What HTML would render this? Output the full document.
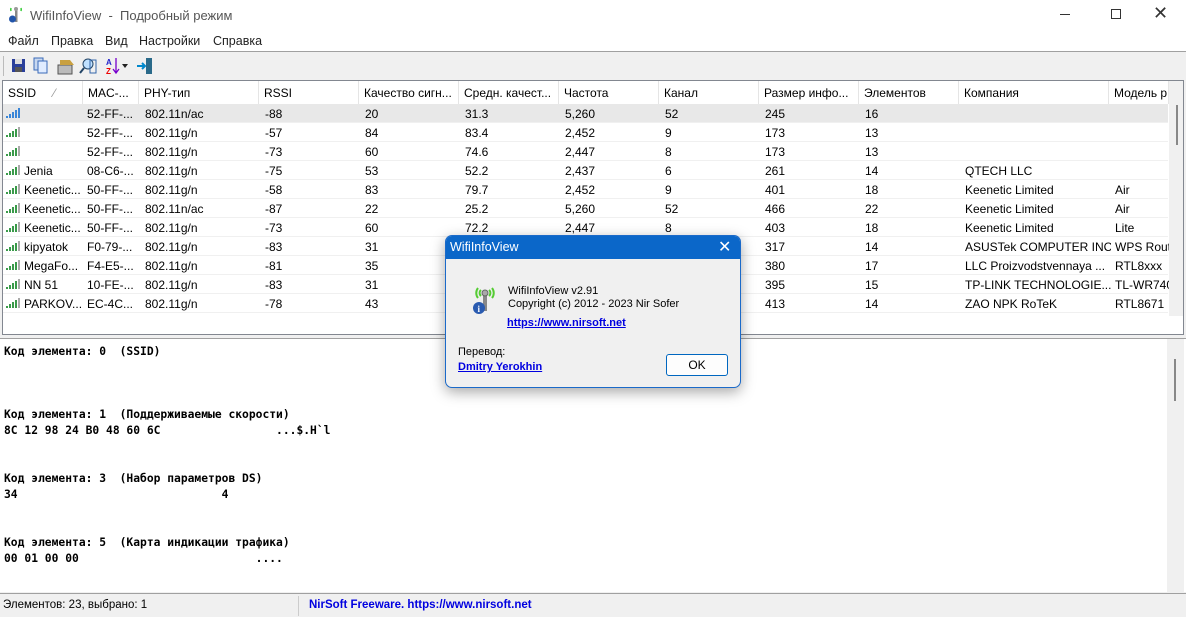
<!DOCTYPE html>
<html><head><meta charset="utf-8"><style>
*{box-sizing:border-box;margin:0;padding:0}
body{width:1186px;height:617px;overflow:hidden;background:#f0f0f0;font-family:"Liberation Sans",sans-serif;font-size:12px;color:#000;position:relative}
.abs{position:absolute}
#title{left:0;top:0;width:1186px;height:32px;background:#fff}
#title .t{left:30px;top:8px;font-size:13px;color:#555}
#menu{left:0;top:32px;width:1186px;height:19px;background:#fff}
#menu span{position:absolute;top:2px;font-size:12.5px;color:#222}
#tb{left:0;top:51px;width:1186px;height:28px;background:#f0f0f0;border-top:1px solid #a0a0a0}
#list{left:2px;top:80px;width:1182px;height:255px;background:#fff;border:1px solid #828790;overflow:hidden}
.hdr{position:absolute;top:0;height:23px;border-right:1px solid #e5e5e5;padding:5px 0 0 5px;font-size:12px;white-space:nowrap;overflow:hidden;background:#fff}
.row{position:absolute;left:0;width:1165px;height:19px;border-bottom:1px solid #f0f0f0}
.row span{position:absolute;top:3px;white-space:nowrap;overflow:hidden;font-size:12px}
.sel{background:#e8e8e8}
#hsb{left:1px;top:315px;width:1165px;height:17px;background:#f0f0f0}
#lower{left:0;top:338px;width:1186px;height:254px;background:#fff;border-top:1px solid #a0a0a0}
#lower pre{position:absolute;left:4px;font-family:"DejaVu Sans Mono",monospace;font-weight:bold;font-size:11.3px;line-height:16px}
#status{left:0;top:593px;width:1186px;height:24px;background:#f0f0f0;border-top:1px solid #a0a0a0}
#dlg{left:445px;top:235px;width:296px;height:153px;background:#f0f0f0;border:1px solid #1b6ac9;border-radius:7px;box-shadow:0 4px 14px rgba(0,0,0,.35);overflow:hidden}
#dlg .tt{left:0;top:0;width:296px;height:23px;background:#0b67c9;color:#fff;font-size:12.5px;padding:4px 0 0 4px}
.lnk{color:#0000e0;font-weight:bold;text-decoration:underline;font-size:11px}
</style></head><body>
<div id="title" class="abs">
<svg class="abs" style="left:8px;top:6px" width="16" height="18" viewBox="0 0 16 18"><path d="M3 5a5 5 0 0 1 0-3M13 5a5 5 0 0 0 0-3" stroke="#3c3" fill="none" stroke-width="1.5"/><rect x="7" y="4" width="2.5" height="12" fill="#888"/><circle cx="8" cy="3" r="2" fill="#999"/><circle cx="4.5" cy="13" r="3.5" fill="#2255aa"/></svg>
<span class="abs t">WifiInfoView &nbsp;- &nbsp;Подробный режим</span>
<span class="abs" style="left:1060px;top:14px;width:10px;height:1px;background:#333"></span>
<span class="abs" style="left:1111px;top:9px;width:10px;height:10px;border:1px solid #333"></span>
<span class="abs" style="left:1153px;top:3px;font-size:18px;color:#333">✕</span>
</div>
<div id="menu" class="abs">
<span style="left:8px">Файл</span><span style="left:51px">Правка</span><span style="left:105px">Вид</span><span style="left:139px">Настройки</span><span style="left:213px">Справка</span>
</div>
<div id="tb" class="abs">
<span class="abs" style="left:3px;top:4px;width:1px;height:20px;background:#bbb"></span>
<svg class="abs" style="left:10px;top:5px" width="150" height="18">
<rect x="2" y="2" width="13" height="13" fill="#2a3f9a"/><rect x="5" y="2" width="7" height="5" fill="#ddd"/><rect x="5" y="10" width="7" height="5" fill="#555"/>
<rect x="24" y="1" width="9" height="12" fill="#c8d8f0" stroke="#3a6ab8"/><rect x="28" y="4" width="9" height="12" fill="#e0ecff" stroke="#3a6ab8"/>
<path d="M48 8h14v9h-14z" fill="#bbb" stroke="#555"/><path d="M50 3h10l4 5h-14z" fill="#c9a040"/>
<circle cx="78" cy="7" r="5" fill="#bfe0ff" stroke="#246"/><path d="M74 11l-4 5" stroke="#246" stroke-width="2"/><rect x="80" y="3" width="6" height="13" fill="none" stroke="#36a"/>
<text x="96" y="8" font-size="8" fill="#22c" font-weight="bold" font-family="Liberation Sans">A</text><text x="96" y="17" font-size="8" fill="#e00" font-weight="bold" font-family="Liberation Sans">Z</text><path d="M106 1v14M103 12l3 4 3-4" stroke="#70c" fill="none" stroke-width="1.3"/><path d="M112 7h6l-3 4z" fill="#222"/>
<path d="M136 1h6v16h-6z" fill="#2a6a8a"/><path d="M127 9h8M132 6l3 3-3 3" stroke="#08c" stroke-width="2" fill="none"/>
</svg>
</div>
<div id="list" class="abs">
<div class="hdr" style="left:0;width:80px">SSID <span style="color:#999;margin-left:14px">⁄</span></div>
<div class="hdr" style="left:80px;width:56px">MAC-...</div>
<div class="hdr" style="left:136px;width:120px">PHY-тип</div>
<div class="hdr" style="left:256px;width:100px">RSSI</div>
<div class="hdr" style="left:356px;width:100px">Качество сигн...</div>
<div class="hdr" style="left:456px;width:100px">Средн. качест...</div>
<div class="hdr" style="left:556px;width:100px">Частота</div>
<div class="hdr" style="left:656px;width:100px">Канал</div>
<div class="hdr" style="left:756px;width:100px">Размер инфо...</div>
<div class="hdr" style="left:856px;width:100px">Элементов</div>
<div class="hdr" style="left:956px;width:150px">Компания</div>
<div class="hdr" style="left:1106px;width:60px">Модель р</div>
<div id="rows"></div>
<div class="abs" style="left:1166px;top:0;width:15px;height:235px;background:#f0f0f0"></div>
<div class="abs" style="left:1173px;top:24px;width:2px;height:40px;background:#888"></div>
<div id="hsb" class="abs"><div class="abs" style="left:18px;top:8px;width:372px;height:2px;background:#888"></div></div>
</div>
<div id="lower" class="abs">
<pre style="top:5px">Код элемента: 0  (SSID)</pre>
<pre style="top:68px">Код элемента: 1  (Поддерживаемые скорости)
8C 12 98 24 B0 48 60 6C                 ...$.H`l</pre>
<pre style="top:132px">Код элемента: 3  (Набор параметров DS)
34                              4</pre>
<pre style="top:196px">Код элемента: 5  (Карта индикации трафика)
00 01 00 00                          ....</pre>
<div class="abs" style="left:1167px;top:0;width:17px;height:253px;background:#f0f0f0"></div>
<div class="abs" style="left:1174px;top:20px;width:2px;height:42px;background:#888"></div>
</div>
<div id="status" class="abs">
<span class="abs" style="left:3px;top:5px;font-size:11.5px">Элементов: 23, выбрано: 1</span>
<span class="abs" style="left:298px;top:2px;width:1px;height:20px;background:#ccc"></span>
<span class="abs" style="left:309px;top:5px;font-size:11.5px;color:#0000e0;font-weight:bold">NirSoft Freeware. https://www.nirsoft.net</span>
</div>
<div id="dlg" class="abs">
<div class="abs tt">WifiInfoView<span style="position:absolute;left:272px;top:1px;font-size:16px">✕</span></div>
<svg class="abs" style="left:24px;top:48px" width="30" height="32" viewBox="0 0 30 32"><path d="M8 14a8 8 0 0 1 0-10M22 14a8 8 0 0 0 0-10M11 12a4 4 0 0 1 0-6M19 12a4 4 0 0 0 0-6" stroke="#5c3" stroke-width="2" fill="none"/><rect x="13" y="9" width="4" height="18" fill="#888"/><circle cx="15" cy="9" r="3" fill="#aaa" stroke="#666"/><circle cx="9" cy="24" r="6" fill="#2a5bb0"/><text x="7.5" y="28" fill="#fff" font-size="9" font-weight="bold" font-family="Liberation Serif">i</text></svg>
<div class="abs" style="left:62px;top:49px;font-size:11px;line-height:13px">WifiInfoView v2.91<br>Copyright (c) 2012 - 2023 Nir Sofer</div>
<div class="abs lnk" style="left:61px;top:81px">https://www.nirsoft.net</div>
<div class="abs" style="left:12px;top:110px;font-size:11px">Перевод:</div>
<div class="abs lnk" style="left:12px;top:125px">Dmitry Yerokhin</div>
<div class="abs" style="left:220px;top:118px;width:62px;height:22px;background:#fdfdfd;border:1px solid #0067c0;border-radius:3px;font-size:12px;text-align:center;padding-top:3px">OK</div>
</div>
<script>
var d=[["","52-FF-...","802.11n/ac","-88","20","31.3","5,260","52","245","16","",""],
["","52-FF-...","802.11g/n","-57","84","83.4","2,452","9","173","13","",""],
["","52-FF-...","802.11g/n","-73","60","74.6","2,447","8","173","13","",""],
["Jenia","08-C6-...","802.11g/n","-75","53","52.2","2,437","6","261","14","QTECH LLC",""],
["Keenetic...","50-FF-...","802.11g/n","-58","83","79.7","2,452","9","401","18","Keenetic Limited","Air"],
["Keenetic...","50-FF-...","802.11n/ac","-87","22","25.2","5,260","52","466","22","Keenetic Limited","Air"],
["Keenetic...","50-FF-...","802.11g/n","-73","60","72.2","2,447","8","403","18","Keenetic Limited","Lite"],
["kipyatok","F0-79-...","802.11g/n","-83","31","","","","317","14","ASUSTek COMPUTER INC.","WPS Rout"],
["MegaFo...","F4-E5-...","802.11g/n","-81","35","","","","380","17","LLC Proizvodstvennaya ...","RTL8xxx"],
["NN 51","10-FE-...","802.11g/n","-83","31","","","","395","15","TP-LINK TECHNOLOGIE...","TL-WR740"],
["PARKOV...","EC-4C...","802.11g/n","-78","43","","","","413","14","ZAO NPK RoTeK","RTL8671"]];
var x=[21,84,142,262,362,462,562,662,762,862,962,1112],w=[60,54,112,94,94,94,94,94,94,94,146,54],h="";
d.forEach(function(r,i){var y=23+i*19;h+='<div class="row'+(i==0?' sel':'')+'" style="top:'+y+'px">';
h+='<svg style="position:absolute;left:3px;top:4px" width="16" height="11">';
for(var k=0;k<5;k++){var hh=2+k*2;h+='<rect x="'+(k*3)+'" y="'+(10-hh)+'" width="2" height="'+hh+'" fill="'+(i==0?'#3a86d8':(k<4?'#3a9a4a':'#aaa'))+'"/>';}
h+='</svg>';
r.forEach(function(c,j){h+='<span style="left:'+x[j]+'px;width:'+w[j]+'px">'+c+'</span>';});
h+='</div>';});
document.getElementById('rows').innerHTML=h;
</script>
</body></html>
